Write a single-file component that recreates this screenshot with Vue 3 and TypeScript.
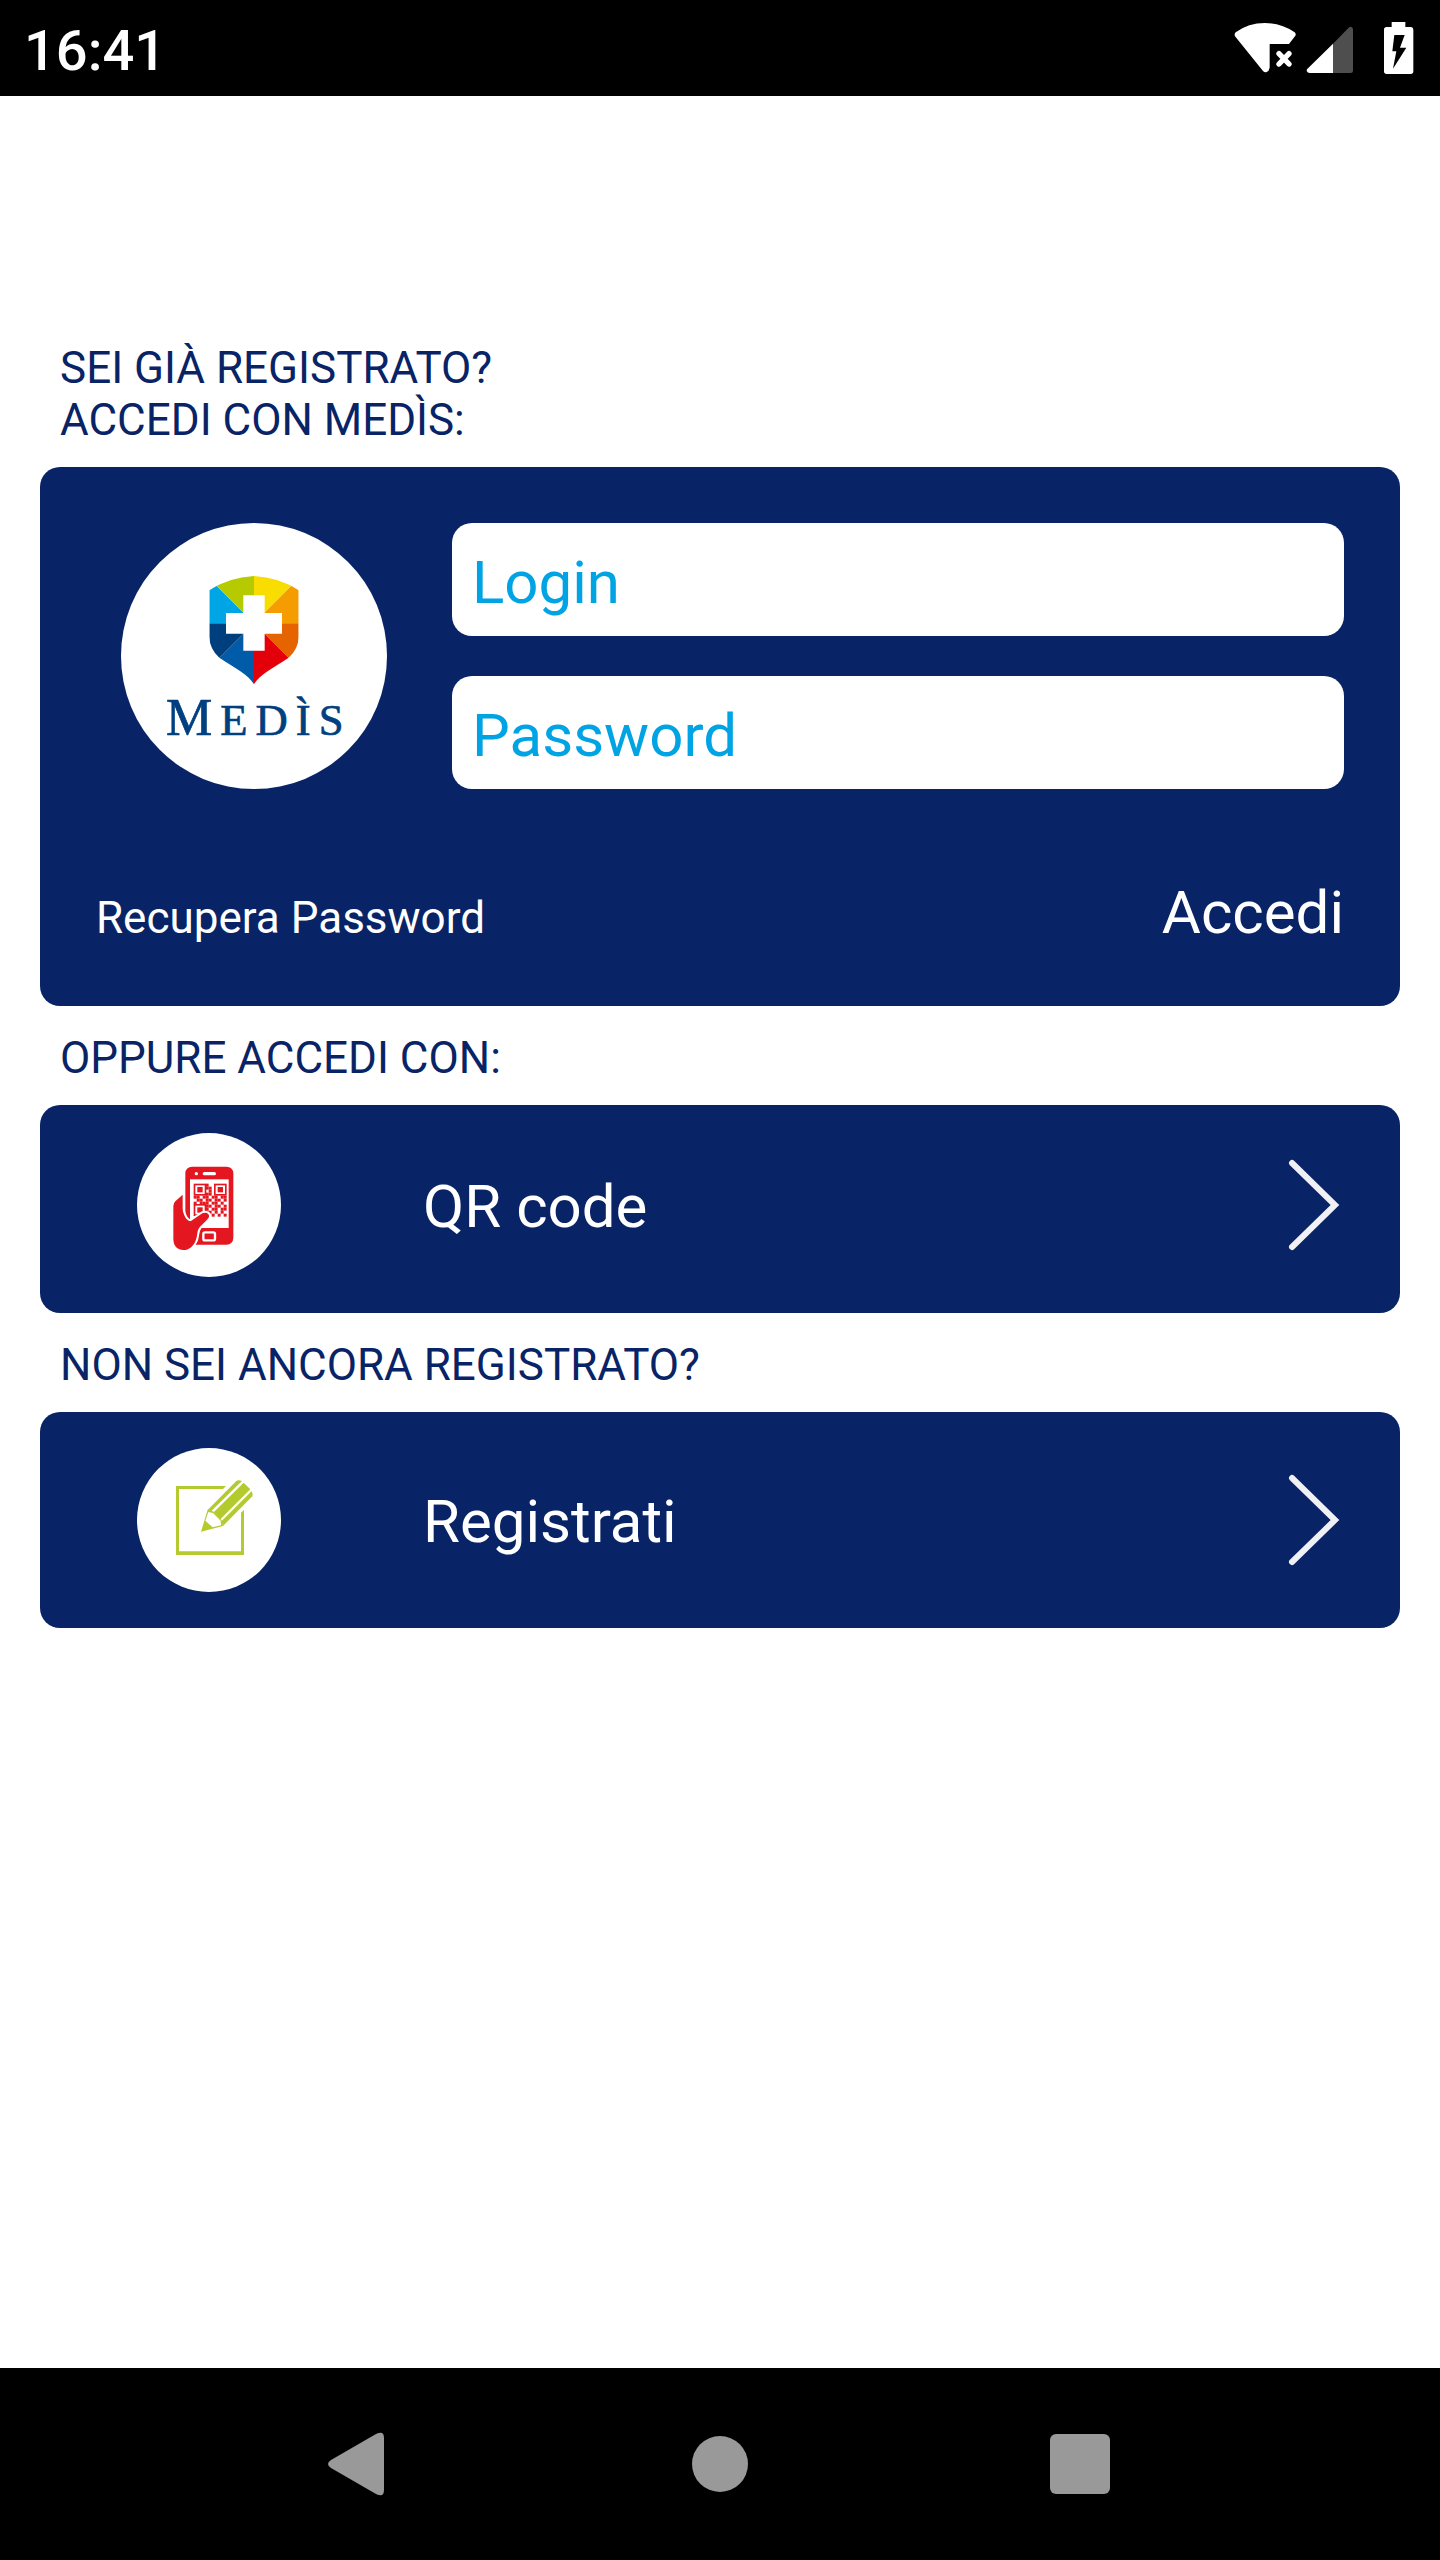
<script setup lang="ts">
import { ref } from 'vue'

const login = ref('')
const password = ref('')

// Dark modules of the miniature QR code, one string per row
const modules: string[] = [
  '....X......',
  '....XX.....',
  '.....X.....',
  '....XX.....',
  'XX.XX.XX.XX',
  '.XX.XX.XX.X',
  'X.XXX.XX.X.',
  '....XX.XX.X',
  '....X.XX.XX',
  '....XX.X.X.',
  '....X.X.X.X',
]

const cells = modules.flatMap((row, y) =>
  [...row].flatMap((c, x) => (c === 'X' ? [{ x: 221 + x * 9, y: 221 + y * 9 }] : [])),
)

const finders = [
  { x: 221, y: 221 },
  { x: 282, y: 221 },
  { x: 221, y: 282 },
]
</script>

<template>
  <div class="screen">
    <header class="status-bar">
      <time class="clock">16:41</time>
      <div class="indicators">
        <svg class="wifi" viewBox="102 60 189 168" aria-hidden="true">
          <path
            fill="#fff"
            d="M107 97 Q145 69 195 69 T284 97 Q289 102 286 107 L267 132 H209 V203 Q207 213 200 216 Q194 218 189 213 L105 109 Q102 102 107 97 Z"
          />
          <path d="M237 161 L267 192 M267 161 L237 192" stroke="#fff" stroke-width="16" stroke-linecap="round" />
        </svg>
        <svg class="signal" viewBox="318 60 144 168" aria-hidden="true">
          <path fill="#4e4e4e" d="M399 131 L446 83 Q452 78 457 83 Q459 85 459 89 V212 Q459 219 452 219 H399 Z" />
          <path fill="#fff" d="M399 131 V219 H328 Q321 218 320 212 Q320 208 324 205 Z" />
        </svg>
        <svg class="battery" viewBox="549 60 93 168" aria-hidden="true">
          <path
            fill="#fff"
            d="M575 66 H616 V81 H633 Q640 82 640 89 V214 Q640 222 632 222 H560 Q552 222 552 214 V89 Q552 81 560 81 H575 Z"
          />
          <path fill="#000" d="M583 105 H614 L600 143 H619 L579 206 L589 154 H577 Z" />
        </svg>
      </div>
    </header>

    <main class="content">
      <h1 class="section-label">SEI GIÀ REGISTRATO?<br />ACCEDI CON MEDÌS:</h1>

      <form class="card login-card" @submit.prevent>
        <div class="credentials">
          <svg class="logo" viewBox="33 39 798 798" role="img" aria-label="Medìs">
            <defs>
              <clipPath id="shield">
                <path
                  d="M432 198 Q508 202 566 241 V380 Q565 417 536 443 C485 477 450 492 432 523 C414 492 379 477 328 443 Q299 417 298 380 V241 Q356 202 432 198 Z"
                />
              </clipPath>
            </defs>
            <circle cx="432" cy="438" r="399" fill="#fff" />
            <g clip-path="url(#shield)">
              <path fill="#f9dc00" d="M432 340 V190 H582 Z" />
              <path fill="#f59c00" d="M432 340 L582 190 V340 Z" />
              <path fill="#e66400" d="M432 340 H582 V490 Z" />
              <path fill="#e3000b" d="M432 340 L632 540 H432 Z" />
              <path fill="#005ca9" d="M432 340 V540 H232 Z" />
              <path fill="#003f7e" d="M432 340 L282 490 V340 Z" />
              <path fill="#00a5e6" d="M432 340 H282 V190 Z" />
              <path fill="#b6ca00" d="M432 340 L282 190 H432 Z" />
            </g>
            <path fill="#fff" d="M400 256 H464 V309 H516 V371 H464 V422 H400 V371 H348 V309 H400 Z" />
            <text class="wordmark" x="168" y="676"><tspan class="initial">M</tspan>EDÌS</text>
          </svg>
          <div class="fields">
            <input v-model="login" class="field" type="text" placeholder="Login" aria-label="Login" />
            <input v-model="password" class="field" type="password" placeholder="Password" aria-label="Password" />
          </div>
        </div>
        <div class="actions">
          <a class="recover" href="#">Recupera Password</a>
          <button class="submit" type="submit">Accedi</button>
        </div>
      </form>

      <h2 class="section-label">OPPURE ACCEDI CON:</h2>

      <button class="card option option-qr" type="button">
        <svg class="badge" viewBox="51 69 432 432" aria-hidden="true">
          <circle cx="267" cy="285" r="216" fill="#fff" />
          <rect x="196" y="170" width="144" height="234" rx="20" fill="#e41720" />
          <circle cx="229" cy="191" r="5" fill="#fff" />
          <rect x="248" y="186" width="40" height="10" rx="5" fill="#fff" />
          <rect x="210" y="208" width="116" height="146" fill="#fff" />
          <rect x="250" y="367" width="35" height="24" rx="5" fill="none" stroke="#fff" stroke-width="7" />
          <g fill="#e41720">
            <rect v-for="c in cells" :key="`${c.x}-${c.y}`" :x="c.x" :y="c.y" width="9" height="9" />
          </g>
          <g v-for="f in finders" :key="`${f.x}-${f.y}`">
            <rect :x="f.x" :y="f.y" width="38" height="36" fill="#e41720" />
            <rect :x="f.x + 5" :y="f.y + 5" width="28" height="26" fill="#fff" />
            <rect :x="f.x + 11" :y="f.y + 10" width="16" height="16" fill="#e41720" />
          </g>
          <path
            fill="#e41720"
            stroke="#fff"
            stroke-width="12"
            stroke-linejoin="round"
            paint-order="stroke"
            d="M188 254 L166 274 Q160 280 160 288 V388 C161 411 174 420 190 420 C208 420 220 408 227 392 C234 375 229 365 239 352 C247 342 264 329 267 321 C269 311 258 305 247 310 L213 333 C201 337 188 312 188 294 Z"
          />
        </svg>
        <span class="option-label">QR code</span>
        <svg class="chevron" viewBox="0 0 52 92" aria-hidden="true">
          <path d="M4 4 L47 46 L4 88" />
        </svg>
      </button>

      <h2 class="section-label">NON SEI ANCORA REGISTRATO?</h2>

      <button class="card option" type="button">
        <svg class="badge" viewBox="51 54 432 432" aria-hidden="true">
          <circle cx="267" cy="270" r="216" fill="#fff" />
          <path fill="#b5ca2e" d="M318 168 H168 V375 H372 V239 L363 248 V364 H177 V177 H309 Z" />
          <path fill="#b5ca2e" d="M263 240 L349 153 Q354 149 366 153 L274 243 Z" />
          <path fill="#b5ca2e" d="M281 247 L371 158 L391 178 L301 268 Z" />
          <path fill="#b5ca2e" d="M305 273 L395 183 Q400 193 397 199 L309 288 Z" />
          <path
            fill="#b5ca2e"
            fill-rule="evenodd"
            d="M263 239 L276 242 L282 247 L302 267 L306 273 L309 288 L243 305 Z M265 246 L256 272 L278 292 L303 286 L302 272 L279 249 Z"
          />
        </svg>
        <span class="option-label">Registrati</span>
        <svg class="chevron" viewBox="0 0 52 92" aria-hidden="true">
          <path d="M4 4 L47 46 L4 88" />
        </svg>
      </button>
    </main>

    <nav class="nav-bar" aria-label="Sistema">
      <button class="nav-button" type="button" aria-label="Indietro">
        <svg viewBox="0 0 64 64" aria-hidden="true">
          <path fill="#999" d="M3 28 L48 2 Q56 -2 56 6 V58 Q56 66 48 62 L3 36 Q-3 32 3 28 Z" />
        </svg>
      </button>
      <button class="nav-button" type="button" aria-label="Home">
        <svg viewBox="0 0 64 64" aria-hidden="true"><circle cx="32" cy="32" r="28" fill="#999" /></svg>
      </button>
      <button class="nav-button" type="button" aria-label="App recenti">
        <svg viewBox="0 0 64 64" aria-hidden="true">
          <rect x="2" y="2" width="60" height="60" rx="6" fill="#999" />
        </svg>
      </button>
    </nav>
  </div>
</template>

<style>
body {
  margin: 0;
  background: #fff;
}
</style>

<style scoped>
.screen {
  display: flex;
  flex-direction: column;
  min-height: 100vh;
  background: #fff;
  font-family: Roboto, 'Liberation Sans', sans-serif;
}

.status-bar {
  display: flex;
  align-items: center;
  justify-content: space-between;
  height: 96px;
  padding: 0 26px 0 24px;
  background: #000;
  color: #fff;
}

.clock {
  padding-top: 6px;
  font-size: 56px;
  font-weight: 500;
  line-height: 64px;
}

.indicators {
  display: flex;
  align-items: center;
}

.indicators svg {
  height: 56px;
}

.wifi {
  width: 63px;
  margin-right: 9px;
}

.signal {
  width: 48px;
  margin-right: 29px;
}

.battery {
  width: 31px;
}

.content {
  display: flex;
  flex: 1;
  flex-direction: column;
  padding: 220px 40px 40px;
}

.section-label {
  margin: 26px 20px 21px;
  color: #092466;
  font-size: 44px;
  font-weight: 400;
  line-height: 52px;
}

.card {
  box-sizing: border-box;
  width: 100%;
  border: 0;
  border-radius: 20px;
  background: #092466;
  color: #fff;
  font-family: inherit;
}

.login-card {
  padding: 56px 56px 57px;
}

.credentials {
  display: flex;
  gap: 65px;
  padding-left: 25px;
}

.logo {
  flex: none;
  width: 266px;
  height: 266px;
}

.wordmark {
  fill: #00407f;
  stroke: #00407f;
  stroke-width: 2px;
  font-family: 'Liberation Serif', serif;
  font-size: 134px;
  letter-spacing: 24px;
}

.initial {
  font-size: 156px;
}

.fields {
  display: flex;
  flex: 1;
  flex-direction: column;
  gap: 40px;
  min-width: 0;
}

.field {
  box-sizing: border-box;
  width: 100%;
  height: 113px;
  padding: 6px 20px 0;
  border: 0;
  border-radius: 20px;
  background: #fff;
  color: #00a3e4;
  font-family: inherit;
  font-size: 60px;
}

.field::placeholder {
  color: #00a3e4;
  opacity: 1;
}

.actions {
  display: flex;
  align-items: baseline;
  justify-content: space-between;
  margin-top: 88px;
}

.recover {
  color: #fff;
  font-size: 44px;
  line-height: 52px;
  text-decoration: none;
}

.submit {
  padding: 0;
  border: 0;
  background: none;
  color: #fff;
  font-family: inherit;
  font-size: 60px;
  line-height: 72px;
}

.option {
  display: flex;
  align-items: center;
  padding: 36px 60px 36px 97px;
  text-align: left;
}

.option-qr {
  padding-top: 28px;
}

.badge {
  flex: none;
  width: 144px;
  height: 144px;
}

.option-label {
  flex: 1;
  padding: 4px 0 0 142px;
  font-size: 60px;
  line-height: 72px;
}

.chevron {
  flex: none;
  width: 52px;
  height: 92px;
}

.chevron path {
  fill: none;
  stroke: #f0f0f5;
  stroke-width: 6;
  stroke-linecap: round;
}

.nav-bar {
  display: flex;
  align-items: center;
  height: 192px;
  padding: 0 12.5%;
  background: #000;
}

.nav-button {
  display: flex;
  flex: 1;
  justify-content: center;
  padding: 0;
  border: 0;
  background: none;
}

.nav-button svg {
  width: 64px;
  height: 64px;
}
</style>
